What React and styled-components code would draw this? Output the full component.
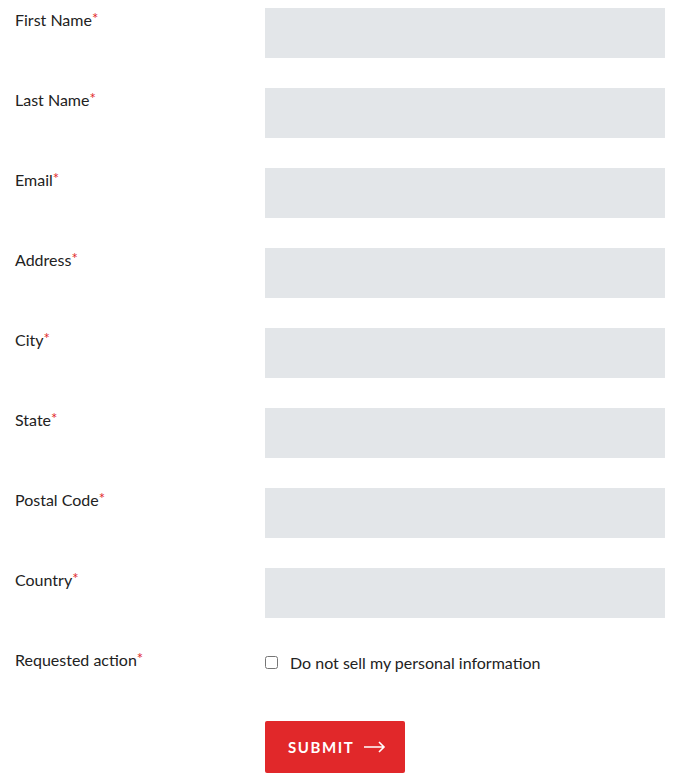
import { Fragment } from "react";
import styled, { createGlobalStyle } from "styled-components";

const GlobalStyle = createGlobalStyle`
  body {
    margin: 0;
    background: #ffffff;
    font-family: Lato, "Open Sans", sans-serif;
    color: #222222;
  }
`;

const Form = styled.form`
  display: grid;
  grid-template-columns: 250px 400px;
  row-gap: 30px;
  padding: 8px 11px 0 15px;
`;

const Label = styled.label`
  font-size: 16px;
  line-height: 20px;
  padding-top: 2px;
`;

const Required = styled.span`
  color: #e1282a;
  font-size: 15px;
  vertical-align: top;
  line-height: 16px;
`;

const Input = styled.input`
  box-sizing: border-box;
  width: 400px;
  height: 50px;
  border: none;
  background: #e3e6e9;
  padding: 0 12px;
  font: inherit;
`;

const CheckRow = styled.label`
  display: flex;
  align-items: center;
  gap: 12px;
  height: 30px;
  margin-top: -1px;
  font-size: 16px;
`;

const Check = styled.input`
  width: 13px;
  height: 13px;
  margin: 0;
`;

const Submit = styled.button`
  grid-column: 2;
  justify-self: start;
  display: flex;
  align-items: center;
  gap: 10px;
  height: 52px;
  padding: 0 19px 0 23px;
  margin-top: 14px;
  border: none;
  border-radius: 2px;
  background: #e1282a;
  color: #ffffff;
  font-family: inherit;
  font-size: 15px;
  font-weight: 700;
  letter-spacing: 1.6px;
`;

const fields = [
  "First Name",
  "Last Name",
  "Email",
  "Address",
  "City",
  "State",
  "Postal Code",
  "Country",
];

export default function App() {
  return (
    <>
      <GlobalStyle />
      <Form onSubmit={(e) => e.preventDefault()}>
        {fields.map((f) => (
          <Fragment key={f}>
            <Label>
              {f}
              <Required>*</Required>
            </Label>
            <Input type="text" />
          </Fragment>
        ))}
        <Label>
          Requested action<Required>*</Required>
        </Label>
        <CheckRow>
          <Check type="checkbox" />
          Do not sell my personal information
        </CheckRow>
        <Submit type="submit">
          SUBMIT
          <svg width="22" height="12" viewBox="0 0 22 12" fill="none" stroke="#fff" strokeWidth="1.6">
            <path d="M0 6h20M15 1l5 5-5 5" />
          </svg>
        </Submit>
      </Form>
    </>
  );
}
